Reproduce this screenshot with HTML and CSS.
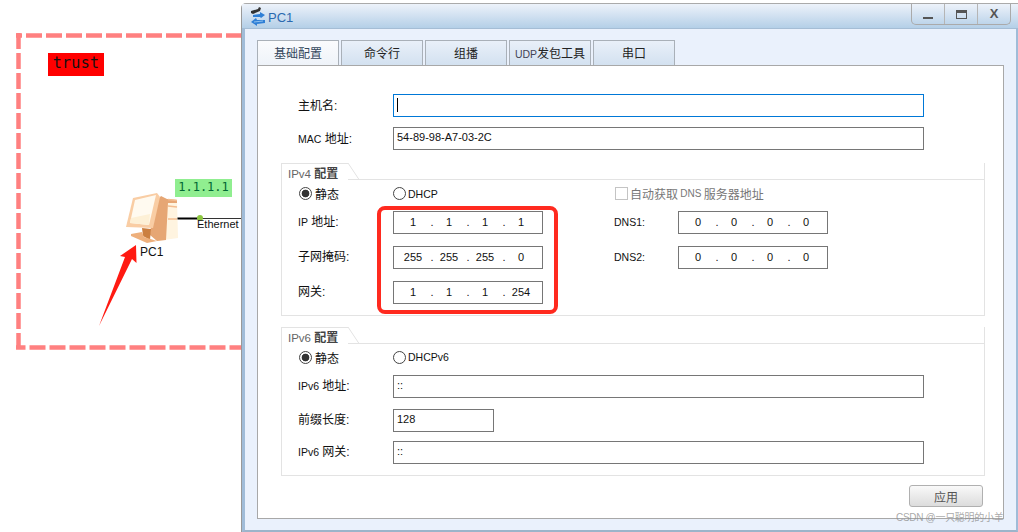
FILE: index.html
```html
<!DOCTYPE html>
<html lang="en">
<head>
    <meta charset="UTF-8">
    <meta name="viewport" content="width=device-width, initial-scale=1.0">
    <title>PC1</title>
    <link rel="stylesheet" href="styles.css">
</head>
<body>

<div class="desktop">
    <!-- topology canvas -->
    <svg class="canvas" width="241" height="532" viewBox="0 0 241 532">
        <g fill="none" stroke="#ff8080" stroke-width="4.5">
            <path d="M16 35.5H241" stroke-dasharray="16 4" stroke-dashoffset="10"/>
            <path d="M18.5 33V350" stroke-dasharray="16 4"/>
            <path d="M16 347.5H241" stroke-dasharray="16 4" stroke-dashoffset="6.5"/>
        </g>
        <path d="M177 218.5H200" stroke="#000" stroke-width="2"/>
        <path d="M200 218.5H241" stroke="#333" stroke-width="1"/>
        <circle cx="200" cy="218" r="3" fill="#8cc63f"/>
        <!-- pc icon -->
        <path d="M159 198L177 200L178 238L157 241Z" fill="#fff4e0"/>
        <path d="M161 196L167 199L177 200L177 203L168 203L166 240L157 241L150 235L153 205Z" fill="#e6a674"/>
        <path d="M168 199.500L177 200.500M168 206L177 207M168 219L177 219" stroke="#f3bd90" stroke-width="1.500"/>
        <path d="M133 198L157 193L160 197L153 228L126 227Z" fill="#f9cda4"/>
        <path d="M130 223L135 200L156 195L149 225Z" fill="#fffaf0"/>
        <path d="M131 218L150 214L149 225L130 223Z" fill="#fdf0d6"/>
        <path d="M142 228L151 229L150 240L143 236Z" fill="#cb7f40"/>
        <path d="M131 234L142 232L144 237L157 241L147 243L131 236Z" fill="#eeb07c"/>
        <!-- annotation arrow -->
        <path d="M99 326L125 257L120 256L136 245L136.500 263L132 259Z" fill="#ff1a12"/>
    </svg>

    <div class="tag tag-trust">trust</div>
    <div class="tag tag-ip">1.1.1.1</div>
    <div class="node-label">PC1</div>
    <div class="port-label">Ethernet</div>

    <div class="window">
        <div class="titlebar">
            <svg class="app-icon" width="17" height="20" viewBox="0 0 17 20">
                <path d="M1 4L8 2L9 0L11 1L10 4L3 7L1 6Z" fill="#333"/>
                <path d="M3 10L3 8L10 7L10 5L15 8L11 11L10 10Z" fill="#2f7fd6"/>
                <path d="M15 13L15 16L7 17L7 19L1 15L6 11L7 13Z" fill="#2f7fd6"/>
                <path d="M4 15L13 14" stroke="#8fc0ee" stroke-width="1"/>
            </svg>
            <span class="title">PC1</span>
            <div class="win-buttons">
                <div class="win-btn"><span class="icon-min"></span></div>
                <div class="win-btn"><span class="icon-max"></span></div>
                <div class="win-btn btn-x">X</div>
            </div>
        </div>

        <div class="client">
            <div class="tabs">
                <div class="tab active">基础配置</div>
                <div class="tab">命令行</div>
                <div class="tab">组播</div>
                <div class="tab"><span class="en tab-en">UDP</span>发包工具</div>
                <div class="tab">串口</div>
            </div>

            <div class="panel">
                <div class="row">
                    <label>主机名:</label>
                    <div class="field field-wide focus"><span class="caret"></span></div>
                </div>
                <div class="row row-mac">
                    <label><span class="en">MAC</span> 地址:</label>
                    <input class="field field-wide" type="text" value="54-89-98-A7-03-2C">
                </div>

                <div class="group group-v4">
                    <div class="group-head">
                        <div class="group-title"><span class="en">IPv4</span> <b>配置</b></div>
                        <svg class="notch" width="11" height="17" viewBox="0 0 11 17"><path d="M0 0L11 16.500H0" fill="#fff" stroke="#e3e3e3"/></svg>
                        <div class="group-line"></div>
                    </div>
                    <div class="form-grid v4">
                        <div class="choice"><span class="radio checked"></span>静态</div>
                        <div class="choice choice-alt"><span class="radio"></span><span class="en">DHCP</span></div>
                        <div class="choice choice-dns"><span class="checkbox"></span>自动获取 <span class="en">DNS</span> 服务器地址</div>

                        <label><span class="en">IP</span> 地址:</label>
                        <div class="field ip"><span>1</span><i>.</i><span>1</span><i>.</i><span>1</span><i>.</i><span>1</span></div>
                        <label class="dns-label"><span class="en">DNS1:</span></label>
                        <div class="field ip"><span>0</span><i>.</i><span>0</span><i>.</i><span>0</span><i>.</i><span>0</span></div>

                        <label>子网掩码:</label>
                        <div class="field ip"><span>255</span><i>.</i><span>255</span><i>.</i><span>255</span><i>.</i><span>0</span></div>
                        <label class="dns-label"><span class="en">DNS2:</span></label>
                        <div class="field ip"><span>0</span><i>.</i><span>0</span><i>.</i><span>0</span><i>.</i><span>0</span></div>

                        <label>网关:</label>
                        <div class="field ip"><span>1</span><i>.</i><span>1</span><i>.</i><span>1</span><i>.</i><span>254</span></div>
                    </div>
                </div>

                <div class="group group-v6">
                    <div class="group-head">
                        <div class="group-title"><span class="en">IPv6</span> <b>配置</b></div>
                        <svg class="notch" width="11" height="17" viewBox="0 0 11 17"><path d="M0 0L11 16.500H0" fill="#fff" stroke="#e3e3e3"/></svg>
                        <div class="group-line"></div>
                    </div>
                    <div class="form-grid v6">
                        <div class="choice"><span class="radio checked"></span>静态</div>
                        <div class="choice choice-alt"><span class="radio"></span><span class="en">DHCPv6</span></div>

                        <label><span class="en">IPv6</span> 地址:</label>
                        <input class="field field-wide" type="text" value="::">

                        <label>前缀长度:</label>
                        <input class="field field-short" type="text" value="128">

                        <label><span class="en">IPv6</span> 网关:</label>
                        <input class="field field-wide" type="text" value="::">
                    </div>
                </div>

                <div class="actions">
                    <button class="apply">应用</button>
                </div>
            </div>
        </div>
    </div>

    <!-- red highlight drawn over the window -->
    <div class="highlight"></div>
    <div class="watermark">CSDN @一只聪明的小羊</div>
</div>

</body>
</html>
```

FILE: styles.css
```css
* {
    box-sizing: border-box;
}
body {
    margin: 0;
    background: white;
    font-family: "Liberation Sans", "Noto Sans CJK SC", sans-serif;
    font-size: 12px;
    color: #111;
}
.desktop {
    position: relative;
    width: 1018px;
    height: 532px;
    overflow: hidden;
}
.canvas {
    position: absolute;
    left: 0;
    top: 0;
}
.tag {
    position: absolute;
    font-family: "DejaVu Sans Mono", monospace;
    text-align: center;
}
.tag-trust {
    left: 48px;
    top: 53px;
    width: 56px;
    height: 23px;
    background: #ff0000;
    font-size: 15px;
    line-height: 21px;
    letter-spacing: 0.3px;
    color: #111;
}
.tag-ip {
    left: 175px;
    top: 179px;
    width: 57px;
    height: 18px;
    background: #90ee90;
    font-size: 12px;
    line-height: 17px;
    color: #063;
}
.node-label {
    position: absolute;
    left: 140px;
    top: 245px;
    font-size: 12px;
    line-height: 14px;
}
.port-label {
    position: absolute;
    left: 197px;
    top: 218px;
    font-size: 11px;
    line-height: 13px;
}

/* window */
.window {
    position: absolute;
    left: 241px;
    top: 3px;
    width: 777px;
    height: 529px;
    border-top: 1px solid #aaa;
    border-left: 1px solid #999;
    border-top-left-radius: 5px;
}
.titlebar {
    display: flex;
    align-items: flex-start;
    height: 24px;
    background: linear-gradient(#edf2fa, #b4cfe7);
}
.app-icon {
    margin: 3px 0 0 8px;
}
.title {
    margin: 6px 0 0 1px;
    font-size: 13px;
    line-height: 16px;
    color: #2a6ab0;
}
.win-buttons {
    display: flex;
    margin-left: auto;
    margin-right: 7px;
    height: 21px;
    border: 1px solid #aaa;
    border-top: none;
    border-radius: 0 0 5px 5px;
}
.win-btn {
    display: flex;
    justify-content: center;
    width: 33px;
    border-left: 1px solid #b5b5b5;
}
.win-btn:first-child {
    width: 32px;
    border-left: none;
}
.icon-min {
    width: 10px;
    height: 2px;
    margin-top: 13px;
    background: #555;
}
.icon-max {
    width: 11px;
    height: 9px;
    margin-top: 6px;
    border: 1px solid #555;
    border-top-width: 3px;
}
.btn-x {
    font-size: 13px;
    font-weight: bold;
    line-height: 20px;
    color: #555;
}
.client {
    height: 504px;
    padding: 11px 12px;
    background: #eaf1fc;
    border-top: 1px solid #a5bdd5;
    border-left: 3px solid #a0bcd8;
    border-right: 2px solid #a0bcd8;
    border-bottom: 2px solid #9cb4ca;
}
.tabs {
    display: flex;
    gap: 2px;
    height: 25px;
}
.tab {
    width: 82px;
    height: 25px;
    border: 1px solid #a9b0b8;
    border-bottom: none;
    background: linear-gradient(#e9f0f9, #d3e1f0);
    text-align: center;
    line-height: 26px;
    color: #222;
}
.tab.active {
    background: linear-gradient(#fafbfd, #eef3f9);
    color: #33475c;
}
.tab-en {
    color: #445;
}
.panel {
    height: 454px;
    padding: 28px 18px 0 23px;
    background: white;
    border: 1px solid #a8a8a8;
}
.en {
    font-size: 10.5px;
}
.row {
    display: flex;
    align-items: center;
    padding-left: 17px;
}
.row-mac {
    margin-top: 10px;
}
.row label {
    padding-bottom: 3px;
}
label {
    display: block;
    width: 95px;
    white-space: nowrap;
}
.field {
    display: block;
    height: 23px;
    padding: 0 0 0 3px;
    background: white;
    border: 1px solid #767676;
    border-radius: 0;
    outline: none;
    font-family: "Liberation Sans", sans-serif;
    font-size: 11px;
    line-height: 21px;
    color: #111;
}
input.field {
    padding-bottom: 3px;
}
.field-wide {
    width: 531px;
}
.field-short {
    width: 101px;
}
.focus {
    border-color: #0078d7;
}
.caret {
    display: block;
    width: 1px;
    height: 14px;
    margin-top: 3px;
    background: #000;
}
.ip {
    display: flex;
    padding-left: 4px;
}
.ip span {
    width: 30px;
    text-align: center;
}
.ip i {
    width: 6px;
    padding-left: 2px;
    font-style: normal;
    text-align: center;
}

/* config groups */
.group {
    border-left: 1px solid #e3e3e3;
    border-right: 1px solid #e3e3e3;
    border-bottom: 1px solid #e3e3e3;
}
.group-v4 {
    margin-top: 13px;
}
.group-v6 {
    margin-top: 11px;
}
.group-head {
    display: flex;
    height: 17px;
}
.group-title {
    width: 66px;
    padding-left: 6px;
    border-top: 1px solid #e3e3e3;
    line-height: 20px;
    color: #666;
    white-space: nowrap;
}
.group-title .en {
    font-size: 11.5px;
}
.group-title b {
    color: #444;
}
.notch {
    flex: none;
}
.group-line {
    flex: 1;
    border-bottom: 1px solid #e3e3e3;
}
.form-grid {
    display: grid;
    align-items: start;
    padding-left: 16px;
}
.form-grid label {
    width: auto;
    line-height: 22px;
}
.v4 {
    grid-template-columns: 95px 150px 71px 64px 150px;
    grid-template-rows: 31px 35px 35px 23px;
    padding-bottom: 11px;
}
.v6 {
    grid-template-columns: 95px 531px;
    grid-template-rows: 31px 34px 32px 23px;
    padding-bottom: 11px;
}
.choice {
    display: flex;
    align-items: center;
    height: 27px;
}
.v6 .choice {
    height: 26px;
}
.choice-dns {
    grid-column: 4 / 6;
    color: #777;
    white-space: pre;
    word-spacing: -1px;
}
.choice-dns .en {
    font-size: 10px;
}
.radio {
    flex: none;
    width: 13px;
    height: 13px;
    margin: 0 3px 0 1px;
    border: 1px solid #444;
    border-radius: 50%;
    background: white;
}
.choice-alt .radio {
    margin-left: 0;
    margin-right: 2px;
}
.radio.checked {
    background: radial-gradient(circle, #333 0 3.5px, white 4.2px);
}
.checkbox {
    flex: none;
    width: 13px;
    height: 13px;
    margin: 0 2px 0 1px;
    border: 1px solid #c4c4c4;
}
.dns-label {
    grid-column: 4;
}
.v4 .field:nth-child(6) {
    grid-column: 5;
}
.actions {
    display: flex;
    justify-content: flex-end;
    margin-top: 9px;
    padding-right: 2px;
}
.apply {
    width: 74px;
    height: 22px;
    padding: 0;
    background: linear-gradient(#f9f9f9, #dcdcdc);
    border: 1px solid #b0b0b0;
    border-radius: 3px;
    font-family: "Liberation Sans", "Noto Sans CJK SC", sans-serif;
    font-size: 12px;
    color: #555;
}

/* overlays */
.highlight {
    position: absolute;
    left: 377px;
    top: 206px;
    width: 181px;
    height: 108px;
    border: 4px solid #ff2a1f;
    border-radius: 8px;
}
.watermark {
    position: absolute;
    left: 896px;
    top: 511px;
    font-size: 10px;
    line-height: 14px;
    letter-spacing: -0.3px;
    color: rgba(140, 140, 140, 0.75);
    white-space: nowrap;
}
```
